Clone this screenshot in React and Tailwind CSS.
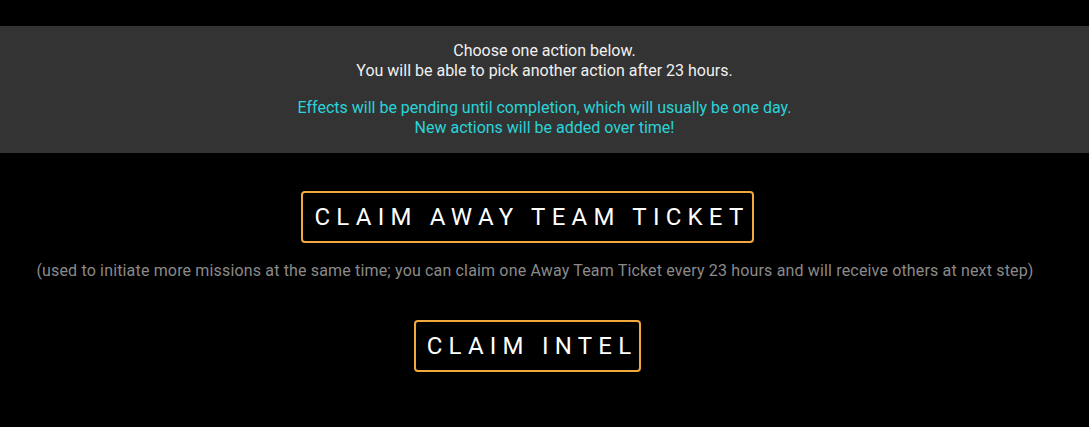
export default function App() {
  const font = { fontFamily: 'Roboto, "Noto Sans", sans-serif' }
  return (
    <div className="min-h-[427px] w-full bg-black pt-[26px]" style={font}>
      <div className="bg-[#333333] py-[15px] text-center text-[16px] leading-5">
        <p className="text-[#f0f0f0]">Choose one action below.</p>
        <p className="text-[#f0f0f0]">You will be able to pick another action after 23 hours.</p>
        <p className="mt-[17px] text-[#2ad4d9]">
          Effects will be pending until completion, which will usually be one day.
        </p>
        <p className="text-[#2ad4d9]">New actions will be added over time!</p>
      </div>

      <div className="flex flex-col items-center">
        <button className="mr-[34px] mt-[38px] h-[52px] rounded-[4px] border-2 border-[#f2a93b] pl-[11px] pr-[2px] text-[24px] tracking-[0.26em] text-white">
          CLAIM AWAY TEAM TICKET
        </button>
        <p className="mr-[19px] mt-[18px] text-[16px] leading-5 tracking-[0.01em] text-[#8a8a8a]">
          (used to initiate more missions at the same time; you can claim one Away Team Ticket every 23 hours and will receive others at next step)
        </p>
        <button className="mr-[34px] mt-[39px] h-[52px] rounded-[4px] border-2 border-[#f2a93b] pl-[11px] pr-[2px] text-[24px] tracking-[0.26em] text-white">
          CLAIM INTEL
        </button>
      </div>
    </div>
  )
}
